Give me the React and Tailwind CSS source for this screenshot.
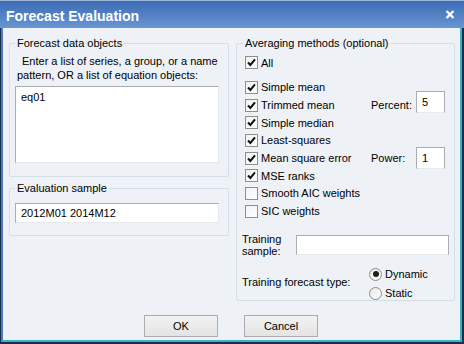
import { useState } from 'react'

// one check row in the averaging list; children go on the right side of the row
function Check({ checked, label, children }) {
  return (
    <div className="flex h-[17.7px] items-center">
      <span className="flex h-[13px] w-[13px] shrink-0 items-center justify-center border border-[#8f8f8f] bg-gradient-to-br from-[#f2f2f2] to-white">
        {checked && (
          <svg width="11" height="11" viewBox="0 0 11 11">
            <path d="M2 5.5 L4.4 8 L9 2.4" fill="none" stroke="#111" strokeWidth="2.1" />
          </svg>
        )}
      </span>
      <span className="ml-[3px] flex-1">{label}</span>
      {children}
    </div>
  )
}

function Radio({ on, label }) {
  return (
    <div className="flex h-[16px] items-center">
      <span className="flex h-[13px] w-[13px] items-center justify-center rounded-full border border-[#8a8a8a] bg-gradient-to-br from-[#e9e9e9] to-white">
        {on && <span className="h-[6px] w-[6px] rounded-full bg-[#1e1e1e]" />}
      </span>
      <span className="ml-[3px]">{label}</span>
    </div>
  )
}

const field = 'border border-[#abadb3] border-b-[#e3e9ef] bg-white outline-none'

export default function App() {
  const [methods] = useState([
    ['Simple mean', true],
    ['Trimmed mean', true, 'Percent:', '5', 'pct'],
    ['Simple median', true],
    ['Least-squares', true],
    ['Mean square error', true, 'Power:', '1', 'pow'],
    ['MSE ranks', true],
    ['Smooth AIC weights', false],
    ['SIC weights', false],
  ])

  return (
    <div className="flex h-[344px] w-[464px] flex-col bg-[#1b2d48] font-['Liberation_Sans',Arial,sans-serif] text-[11px] text-black">
      {/* title bar */}
      <div className="flex h-[28px] items-center justify-between border-t border-t-[#9cb6dc] bg-gradient-to-b from-[#3c6bb3] to-[#6896d4] pl-[6px] pr-[9px] pt-[2px]">
        <span className="text-[14px] font-bold leading-[16px] text-white">Forecast Evaluation</span>
        <svg width="10" height="9" viewBox="0 0 10 9" className="mb-[3px]">
          <path d="M1.5 1 L8.5 8 M8.5 1 L1.5 8" stroke="#fff" strokeWidth="2.4" />
        </svg>
      </div>

      <div className="mb-[2px] ml-px mr-[2px] flex flex-1 flex-col border-b-2 border-l-2 border-r-2 border-b-[#3ab4c4] border-l-[#4b7bc3] border-r-[#3ab4c4] bg-[#eef2f7] pl-[6px] pr-[5px] pt-[8px]">
        <div className="flex gap-[7px]">
          {/* left column */}
          <div className="flex w-[220px] flex-col gap-[4px]">
            <fieldset className="h-[141px] rounded-[2px] border border-[#d5dee6] pl-[5px]">
              <legend className="px-[2px] leading-[14px]">Forecast data objects</legend>
              <p className="pl-[2px] pt-[4px] indent-[5px] leading-[14px]">
                Enter a list of series, a group, or a name pattern, OR a list of equation objects:
              </p>
              <textarea
                readOnly
                defaultValue="eq01"
                className={`mt-[4px] block h-[77px] w-[204px] resize-none border-r-[#e3e9ef] px-[5px] pt-[3px] leading-[14px] ${field}`}
              />
            </fieldset>
            <fieldset className="h-[55px] rounded-[2px] border border-[#d5dee6] pl-[5px]">
              <legend className="px-[2px] leading-[14px]">Evaluation sample</legend>
              <input
                readOnly
                defaultValue="2012M01 2014M12"
                className={`mt-[8px] block h-[20px] w-[204px] border-r-[#e3e9ef] px-[5px] ${field}`}
              />
            </fieldset>
          </div>

          {/* right column */}
          <fieldset className="h-[265px] w-[219px] rounded-[2px] border border-[#d5dee6] pl-[5px] pr-[5px]">
            <legend className="ml-px px-[2px] leading-[14px]">Averaging methods (optional)</legend>
            <div className="pl-[3px] pr-[4px] pt-[4px]">
              <Check checked label="All" />
              <div className="mt-[7px]">
                {methods.map(([label, on, side, val, key]) => (
                  <Check key={label} checked={on} label={label}>
                    {side && (
                      <div className="flex items-center">
                        <span className="w-[45px]">{side}</span>
                        <input
                          readOnly
                          defaultValue={val}
                          className={`h-[22px] w-[29px] px-[5px] ${key === 'pct' ? '-mt-[6px]' : '-my-[3px]'} ${field}`}
                        />
                      </div>
                    )}
                  </Check>
                ))}
              </div>
            </div>
            <div className="mt-[13px] flex h-[24px] items-center">
              <span className="w-[54px] leading-[12px]">Training<br />sample:</span>
              <input readOnly className={`h-[20px] flex-1 ${field}`} />
            </div>
            <div className="mt-[9px] flex">
              <span className="mt-[8px] w-[127px]">Training forecast type:</span>
              <div className="flex flex-col gap-[3px]">
                <Radio on label="Dynamic" />
                <Radio label="Static" />
              </div>
            </div>
          </fieldset>
        </div>

        {/* buttons */}
        <div className="mt-[14px] flex gap-[26px] pl-[135px]">
          <button className="h-[22px] w-[74px] border border-[#acacac] bg-gradient-to-b from-[#f2f2f2] to-[#e4e4e4]">OK</button>
          <button className="h-[22px] w-[74px] border border-[#acacac] bg-gradient-to-b from-[#f2f2f2] to-[#e4e4e4]">Cancel</button>
        </div>
      </div>
    </div>
  )
}
